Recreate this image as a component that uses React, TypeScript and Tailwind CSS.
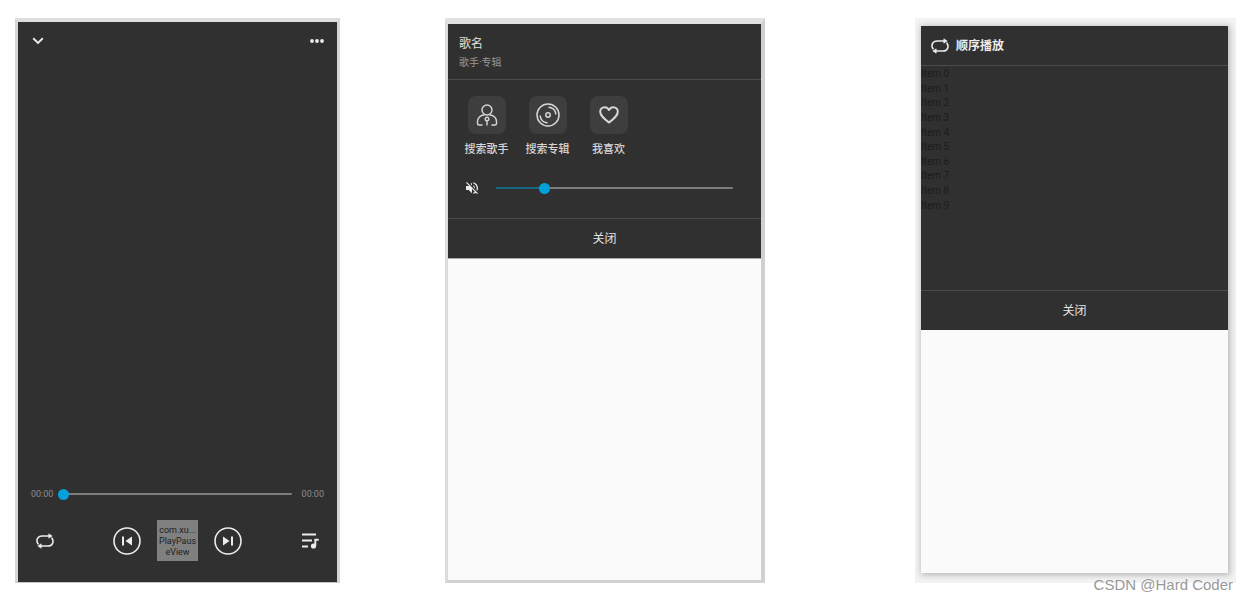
import { useState } from "react";
import type { ReactNode } from "react";
import { MdVolumeOff } from "react-icons/md";

const queue = Array.from({ length: 10 }, (_, i) => `Item ${i}`);

function RepeatIcon() {
  return (
    <svg width="18" height="16" viewBox="0 0 18 16" fill="none" stroke="currentColor" strokeWidth="1.6">
      <path d="M2 10.8C-.4 7 1.8 3 6 3h7.500" strokeLinecap="round" />
      <path d="M16 5.200c2.400 3.800.2 7.800-4 7.800H4.500" strokeLinecap="round" />
      <path d="M12.800.8 16.200 3l-3.400 2.200zM5.200 10.800 1.800 13l3.400 2.200z" fill="currentColor" strokeWidth="0.600" strokeLinejoin="round" />
    </svg>
  );
}

function QueueIcon() {
  return (
    <svg width="18" height="18" viewBox="0 0 18 18" fill="none" stroke="currentColor" strokeWidth="1.9">
      <path d="M1 2.500h14M1 8.500h10M1 14.500h6" />
      <path d="M14.300 14V7.800h3.400" />
      <circle cx="12.500" cy="14" r="2.600" fill="currentColor" stroke="none" />
    </svg>
  );
}

function SkipIcon({ next = false }: { next?: boolean }) {
  return (
    <svg width="28" height="28" viewBox="0 0 28 28" fill="none" stroke="currentColor">
      <circle cx="14" cy="14" r="13" strokeWidth="1.6" />
      <g transform={next ? "rotate(180 14 14)" : undefined}>
        <path d="M10 9.500v9" strokeWidth="2" />
        <path d="M19 9.500v9L12.500 14z" fill="currentColor" stroke="none" />
      </g>
    </svg>
  );
}

function SingerIcon() {
  return (
    <svg width="22" height="24" viewBox="0 0 22 24" fill="none" stroke="currentColor" strokeWidth="1.4" strokeLinecap="round">
      <circle cx="11" cy="7" r="5" />
      <path d="M8 12C4.500 12 1.500 15 1.500 18.500v2c0 1 .5 1.500 1.500 1.500h3M14 12c3.500 0 6.500 3 6.500 6.500v2c0 1-.5 1.500-1.500 1.500h-3" />
      <circle cx="11" cy="16" r="1.800" />
      <path d="M11 18v4" />
    </svg>
  );
}

function DiscIcon() {
  return (
    <svg width="24" height="24" viewBox="0 0 24 24" fill="none" stroke="currentColor" strokeWidth="1.5" strokeLinecap="round">
      <circle cx="12" cy="12" r="11" />
      <circle cx="12" cy="12" r="2.200" />
      <path d="M13 4.200a7.800 7.800 0 0 1 6.800 6.800M11 19.800A7.800 7.800 0 0 1 4.200 13" />
    </svg>
  );
}

function HeartIcon() {
  return (
    <svg width="20" height="18" viewBox="0 0 20 18" fill="none" stroke="currentColor" strokeWidth="2" strokeLinejoin="round">
      <path d="M10 16.500C5 12.500 1.200 9.500 1.200 5.700 1.200 3 3.200 1.200 5.600 1.200c1.900 0 3.500 1 4.400 2.800.9-1.800 2.500-2.800 4.400-2.800 2.400 0 4.400 1.800 4.400 4.500 0 3.800-3.800 6.800-8.800 10.800z" />
    </svg>
  );
}

interface SliderProps {
  label: string;
  initial: number;
}

function Slider({ label, initial }: SliderProps) {
  const [value, setValue] = useState(initial);

  return (
    <input
      type="range"
      aria-label={label}
      min={0}
      max={100}
      value={value}
      onChange={(e) => setValue(Number(e.target.value))}
      style={{ backgroundImage: `linear-gradient(to right, #176a86 ${value}%, #7c7c7c ${value}%)` }}
      className="h-[2px] min-w-0 flex-1 cursor-pointer appearance-none rounded-full outline-none [&::-webkit-slider-thumb]:size-[11px] [&::-webkit-slider-thumb]:appearance-none [&::-webkit-slider-thumb]:rounded-full [&::-webkit-slider-thumb]:bg-[#03a0da]"
    />
  );
}

function ActionTile({ label, children }: { label: string; children: ReactNode }) {
  return (
    <button className="flex w-[61px] flex-col items-center gap-2 text-[11px] leading-4 font-medium text-[#d6d6d6]">
      <span className="flex size-[38px] items-center justify-center rounded-lg bg-[#3e3e3e]">{children}</span>
      {label}
    </button>
  );
}

function CloseButton() {
  return (
    <button className="h-10 w-full border-t border-[#4c4c4c] text-xs text-[#e4e4e4]">关闭</button>
  );
}

function PlayerScreen() {
  return (
    <section className="flex flex-col border-x-3 border-t-4 border-b border-x-[#d6d6d6] border-t-[#dedede] border-b-[#c4c4c4] bg-[#303030] text-[#ececec]">
      <header className="flex h-[38px] items-center justify-between px-[13px]">
        <button aria-label="Collapse" className="flex w-[14px] justify-center">
          <svg width="12" height="8" viewBox="0 0 12 8" fill="none" stroke="currentColor" strokeWidth="1.9">
            <path d="M1.200 1.300 6 6l4.800-4.700" />
          </svg>
        </button>
        <button aria-label="More">
          <svg width="14" height="4" viewBox="0 0 14 4" fill="currentColor">
            <circle cx="2" cy="2" r="1.900" />
            <circle cx="7" cy="2" r="1.900" />
            <circle cx="12" cy="2" r="1.900" />
          </svg>
        </button>
      </header>

      <div className="mt-auto flex items-center px-[13px] text-[9px] leading-3 text-[#8c8c8c]">
        <span className="w-[27px]">00:00</span>
        <Slider label="Progress" initial={0} />
        <span className="w-8 text-right">00:00</span>
      </div>

      <div className="mt-5 mb-[21px] grid grid-cols-[1fr_auto_1fr] items-center px-[18px]">
        <button aria-label="Play mode" className="justify-self-start">
          <RepeatIcon />
        </button>
        <div className="flex items-center gap-4">
          <button aria-label="Previous">
            <SkipIcon />
          </button>
          <button className="flex h-[41px] w-[41px] flex-col items-center justify-end bg-[#808080] pb-[3px] text-[9px] leading-[11px] whitespace-nowrap text-[#222]">
            <span>com.xu...</span>
            <span>PlayPaus</span>
            <span>eView</span>
          </button>
          <button aria-label="Next">
            <SkipIcon next />
          </button>
        </div>
        <button aria-label="Queue" className="justify-self-end">
          <QueueIcon />
        </button>
      </div>
    </section>
  );
}

function SongMenuScreen() {
  return (
    <section className="flex flex-col border-t-6 border-r-4 border-b-3 border-l-3 border-t-[#e2e2e2] border-r-[#d0d0d0] border-b-[#d2d2d2] border-l-[#dcdcdc] bg-[#fafafa]">
      <div className="border-b border-[#aaa] bg-[#303030]">
        <header className="border-b border-[#4c4c4c] px-[11px] pt-3 pb-[9px]">
          <h2 className="text-xs leading-4 text-[#e0e0e0]">歌名</h2>
          <p className="mt-1 text-[10px] leading-[14px] text-[#989898]">歌手·专辑</p>
        </header>

        <div className="flex px-2 pt-4 text-[#dcdcdc]">
          <ActionTile label="搜索歌手">
            <SingerIcon />
          </ActionTile>
          <ActionTile label="搜索专辑">
            <DiscIcon />
          </ActionTile>
          <ActionTile label="我喜欢">
            <HeartIcon />
          </ActionTile>
        </div>

        <div className="flex h-[60px] items-center gap-4 pr-7 pl-4 text-[#ececec]">
          <MdVolumeOff size={16} />
          <Slider label="Volume" initial={19} />
        </div>
        <CloseButton />
      </div>
    </section>
  );
}

function QueueScreen() {
  return (
    <section className="flex flex-col bg-[#f3f3f3] pt-2 pr-2 pb-[10px] pl-[6px]">
      <div className="flex-1 bg-[#fafafa] shadow-[1px_1px_6px_1px_rgba(0,0,0,0.25)]">
        <div className="bg-[#303030]">
          <header className="flex h-10 items-center gap-[7px] border-b border-[#4c4c4c] px-[10px] text-[#ececec]">
            <RepeatIcon />
            <h2 className="text-xs font-bold">顺序播放</h2>
          </header>
          <div className="h-[224px] overflow-hidden pt-px">
            <ul className="grid h-[146px] auto-rows-fr items-center text-[10px] leading-[14px] text-[#1c1c1c]">
              {queue.map((item) => (
                <li key={item}>{item}</li>
              ))}
            </ul>
          </div>
          <CloseButton />
        </div>
      </div>
    </section>
  );
}

export default function App() {
  return (
    <main className="relative grid min-h-screen grid-cols-[325fr_105fr_320fr_150fr_321fr] bg-white py-[18px] pr-[13px] pl-[15px] font-[Roboto,'Noto_Sans_CJK_SC',sans-serif] [&>section:nth-child(2)]:col-start-3 [&>section:nth-child(3)]:col-start-5">
      <PlayerScreen />
      <SongMenuScreen />
      <QueueScreen />
      <p className="absolute right-4 bottom-1 font-['Liberation_Sans',sans-serif] text-[15px] leading-6 text-[#999]">
        CSDN @Hard Coder
      </p>
    </main>
  );
}
